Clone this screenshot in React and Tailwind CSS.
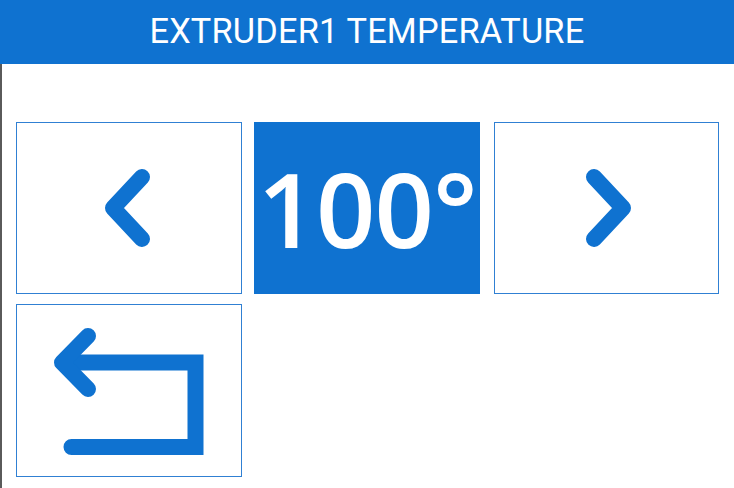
export default function App() {
  const blue = "#0f72d0";

  return (
    <div className="w-[734px] h-[488px] bg-white overflow-hidden flex flex-col">
      <div className="h-16 bg-[#0f72d0] flex items-center justify-center">
        <h1
          className="text-white text-[35px] leading-none tracking-[0.2px] scale-x-[0.98] -mt-[1px]"
          style={{ fontFamily: "Roboto, 'Liberation Sans', sans-serif", fontWeight: 400 }}
        >
          EXTRUDER1 TEMPERATURE
        </h1>
      </div>

      <div className="flex-1 border-l-2 border-[#5a5a5a] pl-[14px] pt-[58px] flex flex-col gap-[10px]">
        <div className="flex h-[172px]">
          <button className="w-[226px] h-full border border-[#3080d3] flex items-center justify-center">
            <svg width="50" height="80" viewBox="0 0 50 80" fill="none">
              <path d="M38 9 L9 40 L38 71" stroke={blue} strokeWidth="16" strokeLinecap="round" strokeLinejoin="round" />
            </svg>
          </button>

          <div
            className="w-[226px] h-full ml-3 bg-[#0f72d0] flex items-center justify-center text-white font-semibold text-[104px] leading-none tracking-[-1px]"
            style={{ fontFamily: "'Open Sans', 'Noto Sans', sans-serif" }}
          >
            100°
          </div>

          <button className="w-[225px] h-full ml-[14px] border border-[#3080d3] flex items-center justify-center">
            <svg width="50" height="80" viewBox="0 0 50 80" fill="none">
              <path d="M12 9 L41 40 L12 71" stroke={blue} strokeWidth="16" strokeLinecap="round" strokeLinejoin="round" />
            </svg>
          </button>
        </div>

        <div className="flex h-[173px]">
          <button className="w-[226px] h-full border border-[#3080d3] flex items-center justify-center">
            <svg width="150" height="130" viewBox="0 0 150 130" fill="none">
              <path d="M17.5 121 H141.5 V36.5 H12" stroke={blue} strokeWidth="16" strokeLinecap="round" strokeLinejoin="miter" />
              <path d="M34 10 L8 36.5 L34 63" stroke={blue} strokeWidth="16" strokeLinecap="round" strokeLinejoin="round" />
            </svg>
          </button>
        </div>
      </div>
    </div>
  );
}
